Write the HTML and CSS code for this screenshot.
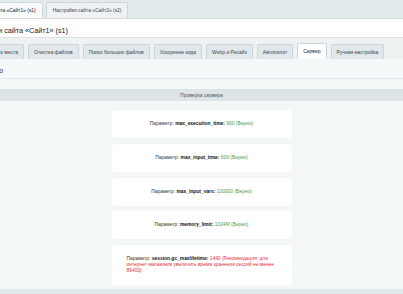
FILE: index.html
```html
<!DOCTYPE html>
<html lang="ru">
<head>
<meta charset="utf-8">
<link rel="stylesheet" href="styles.css">
</head>
<body>
<div class="top-tabs">
  <div class="ttab ttab-active ttab-first">Настройки сайта «Сайт1» (s1)</div>
  <div class="ttab">Настройки сайта «Сайт2» (s2)</div>
</div>
<div class="title-panel"><span class="title">Настройки сайта «Сайт1» (s1)</span></div>
<div class="subtabs">
  <div class="stab stab-first">Анализ места</div>
  <div class="stab">Очистка файлов</div>
  <div class="stab">Поиск больших файлов</div>
  <div class="stab">Ускорение кода</div>
  <div class="stab">Webp и Ресайз</div>
  <div class="stab">Автопилот</div>
  <div class="stab stab-active">Сервер</div>
  <div class="stab">Ручная настройка</div>
</div>
<div class="subcontent"><span class="subtext">Готово</span></div>
<div class="section-head">Проверка сервера</div>
<div class="cards">
  <div class="card"><div class="card-text">Параметр: <b>max_execution_time:</b> <span class="ok">900 (Верно)</span></div></div>
  <div class="card"><div class="card-text">Параметр: <b>max_input_time:</b> <span class="ok">600 (Верно)</span></div></div>
  <div class="card"><div class="card-text">Параметр: <b>max_input_vars:</b> <span class="ok">100000 (Верно)</span></div></div>
  <div class="card"><div class="card-text">Параметр: <b>memory_limit:</b> <span class="ok">1024M (Верно)</span></div></div>
  <div class="card"><div class="card-text">Параметр: <b>session.gc_maxlifetime:</b> <span class="bad">1440 (Рекомендация: для интернет-магазинов увеличить время хранения сессий не менее 86400)</span></div></div>
</div>
<div class="footer-band"></div>
</body>
</html>
```
FILE: styles.css
```css
html, body {
  margin: 0;
  padding: 0;
}
body {
  width: 403px;
  height: 294px;
  overflow: hidden;
  background: #f4f7f8;
  font-family: "Liberation Sans", Arial, sans-serif;
  color: #333;
}
.top-tabs {
  display: flex;
  align-items: flex-end;
  gap: 3px;
  height: 18px;
  background: #e4ebed;
  box-sizing: border-box;
  padding-top: 2px;
}
.ttab {
  flex: none;
  height: 16px;
  line-height: 15px;
  padding: 0 6px;
  font-size: 4.9px;
  color: #444;
  background: #eef2f4;
  border: 1px solid #cdd6d9;
  border-bottom: none;
  border-radius: 2px 2px 0 0;
  box-sizing: border-box;
  white-space: nowrap;
}
.ttab-active {
  background: #f7f9fa;
  color: #222;
}
.ttab-first {
  margin-left: -40px;
}
.title-panel {
  height: 20px;
  background: #fff;
  border-top: 1px solid #d3dbde;
  border-bottom: 1px solid #dde4e6;
  box-sizing: border-box;
  overflow: hidden;
  white-space: nowrap;
}
.title {
  display: inline-block;
  margin-left: -33px;
  font-size: 7.2px;
  line-height: 18px;
  color: #222;
}
.subtabs {
  display: flex;
  align-items: flex-end;
  gap: 4px;
  height: 21px;
  background: #eef2f3;
  box-sizing: border-box;
}
.stab {
  flex: none;
  height: 15px;
  line-height: 14px;
  padding: 0 5px;
  font-size: 5px;
  color: #3c4a50;
  background: #e0e8eb;
  border: 1px solid #ccd6d9;
  border-bottom: none;
  border-radius: 2px 2px 0 0;
  box-sizing: border-box;
  white-space: nowrap;
}
.stab-first {
  margin-left: -20px;
}
.stab-active {
  background: #fff;
  color: #222;
  height: 16px;
}
.subcontent {
  height: 20px;
  background: #f5f8f9;
  border-bottom: 1px solid #dde5e7;
  box-sizing: border-box;
  overflow: hidden;
  white-space: nowrap;
}
.subtext {
  display: inline-block;
  margin-left: -18.6px;
  font-size: 7px;
  line-height: 20px;
  color: #333;
}
.section-head {
  margin-top: 10px;
  height: 12px;
  line-height: 12px;
  background: #dce4e6;
  text-align: center;
  font-size: 5px;
  color: #555;
}
.cards {
  display: flex;
  flex-direction: column;
  align-items: center;
  gap: 5.8px;
  padding-top: 9px;
}
.card {
  width: 180px;
  min-height: 28px;
  box-sizing: border-box;
  padding: 11px 15px;
  background: #fff;
  border-radius: 4px;
  display: flex;
  align-items: center;
  justify-content: center;
}
.card-text {
  font-size: 4.9px;
  line-height: 6px;
  color: #333;
}
.card-text b {
  color: #111;
}
.ok {
  color: #4a9c4a;
}
.bad {
  color: #e3323c;
}
.footer-band {
  margin-top: 4px;
  height: 10px;
  background: #e1e8ea;
}
```
